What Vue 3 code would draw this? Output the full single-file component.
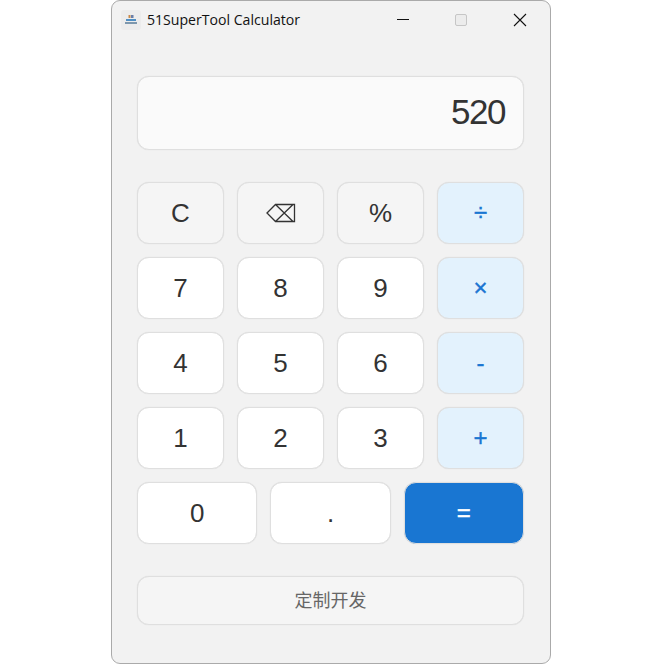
<template>
  <div class="page">
    <div class="window">
      <header class="titlebar">
        <div class="app-icon">
          <svg viewBox="0 0 20 20" width="20" height="20">
            <rect width="20" height="20" rx="3" fill="#ececec" />
            <rect x="7.5" y="5" width="2" height="3" fill="#c98a4a" />
            <rect x="10" y="5" width="2.5" height="3" fill="#6a7fa8" />
            <rect x="5" y="9" width="10" height="2" fill="#4f8fc4" />
            <rect x="4" y="12" width="12" height="2" fill="#7d97ad" />
          </svg>
        </div>
        <span class="app-title">51SuperTool Calculator</span>
        <div class="win-controls">
          <button class="win-btn">
            <svg viewBox="0 0 16 16" width="16" height="16"><path d="M2 7.5H14" stroke="#111" stroke-width="1" /></svg>
          </button>
          <button class="win-btn">
            <svg viewBox="0 0 16 16" width="16" height="16"><rect x="2.5" y="2.5" width="11" height="11" rx="1.5" fill="#ececec" stroke="#c6c6c6" stroke-width="1" /></svg>
          </button>
          <button class="win-btn">
            <svg viewBox="0 0 16 16" width="16" height="16"><path d="M2 2L14 14M14 2L2 14" stroke="#111" stroke-width="1.1" /></svg>
          </button>
        </div>
      </header>

      <main class="content">
        <div class="display">{{ value }}</div>

        <div class="keypad">
          <button
            v-for="key in keys"
            :key="key.label"
            class="key"
            :class="[key.kind, { wide: key.wide }]"
          >
            <svg v-if="key.label === 'back'" class="back-icon" viewBox="0 0 30 20" width="30" height="20">
              <path d="M1 10L9.5 1.5H28.5V18.5H9.5ZM9.5 1.5L27 18.5M27 1.5L9.5 18.5" fill="none" stroke="#333" stroke-width="1.3" />
            </svg>
            <template v-else>{{ key.label }}</template>
          </button>
        </div>

        <button class="custom">定制开发</button>
      </main>
    </div>
  </div>
</template>

<script setup>
import { ref } from 'vue'

const value = ref('520')

const keys = [
  { label: 'C', kind: 'func' },
  { label: 'back', kind: 'func' },
  { label: '%', kind: 'func' },
  { label: '÷', kind: 'op' },
  { label: '7', kind: 'num' },
  { label: '8', kind: 'num' },
  { label: '9', kind: 'num' },
  { label: '×', kind: 'op' },
  { label: '4', kind: 'num' },
  { label: '5', kind: 'num' },
  { label: '6', kind: 'num' },
  { label: '-', kind: 'op' },
  { label: '1', kind: 'num' },
  { label: '2', kind: 'num' },
  { label: '3', kind: 'num' },
  { label: '+', kind: 'op' },
  { label: '0', kind: 'num', wide: true },
  { label: '.', kind: 'num', wide: true },
  { label: '=', kind: 'equals', wide: true }
]
</script>

<style>
html, body {
  background: #fff;
}
</style>

<style scoped>
.page {
  width: 664px;
  height: 664px;
  padding-left: 111px;
  box-sizing: border-box;
  font-family: "Liberation Sans", "Noto Sans CJK SC", sans-serif;
}

.window {
  box-sizing: border-box;
  width: 440px;
  height: 664px;
  background: #f2f2f2;
  border: 1px solid #aaa;
  border-radius: 9px;
  overflow: hidden;
  display: flex;
  flex-direction: column;
}

.titlebar {
  height: 38px;
  flex-shrink: 0;
  display: flex;
  align-items: center;
  padding-left: 9px;
}

.app-icon {
  width: 20px;
  height: 20px;
  margin-right: 6px;
}

.app-icon svg {
  display: block;
}

.app-title {
  font-family: "Open Sans", sans-serif;
  font-size: 14.1px;
  color: #111;
  white-space: nowrap;
  padding-bottom: 1px;
}

.win-controls {
  margin-left: auto;
  margin-right: 1px;
  display: flex;
}

.win-btn {
  width: 58.5px;
  height: 38px;
  padding: 0;
  border: none;
  background: none;
  display: flex;
  align-items: center;
  justify-content: center;
}

.content {
  padding: 37px 26px 0 25px;
  display: flex;
  flex-direction: column;
}

.display {
  box-sizing: border-box;
  height: 74px;
  padding: 0 18px 2px 0;
  display: flex;
  align-items: center;
  justify-content: flex-end;
  font-size: 35px;
  letter-spacing: -1.5px;
  color: #333;
  background: #fafafa;
  border: 1px solid #dfdfdf;
  box-shadow: 0 0 1px rgba(0, 0, 0, 0.12);
  border-radius: 12px;
}

.keypad {
  margin-top: 32px;
  display: grid;
  grid-template-columns: repeat(12, 1fr);
  grid-auto-rows: 62px;
  gap: 13px;
}

.key {
  grid-column: span 3;
  padding: 0;
  display: flex;
  align-items: center;
  justify-content: center;
  font-family: inherit;
  font-size: 26px;
  color: #333;
  background: #fff;
  border: 1px solid #dfdfdf;
  box-shadow: 0 0 1px rgba(0, 0, 0, 0.12);
  border-radius: 12px;
}

.key.wide {
  grid-column: span 4;
}

.key.func {
  background: #f5f5f5;
}

.key.op {
  background: #e3f2fd;
  color: #1976d2;
  font-size: 24px;
  -webkit-text-stroke: 0.4px #1976d2;
}

.key.equals {
  background: #1976d2;
  color: #fff;
  font-size: 24px;
  -webkit-text-stroke: 0.4px #fff;
}

.back-icon {
  display: block;
}

.custom {
  margin-top: 32px;
  height: 49px;
  padding: 0 0 3px;
  font-family: inherit;
  font-size: 18px;
  color: #666;
  background: #f5f5f5;
  border: 1px solid #dfdfdf;
  box-shadow: 0 0 1px rgba(0, 0, 0, 0.12);
  border-radius: 12px;
}
</style>
